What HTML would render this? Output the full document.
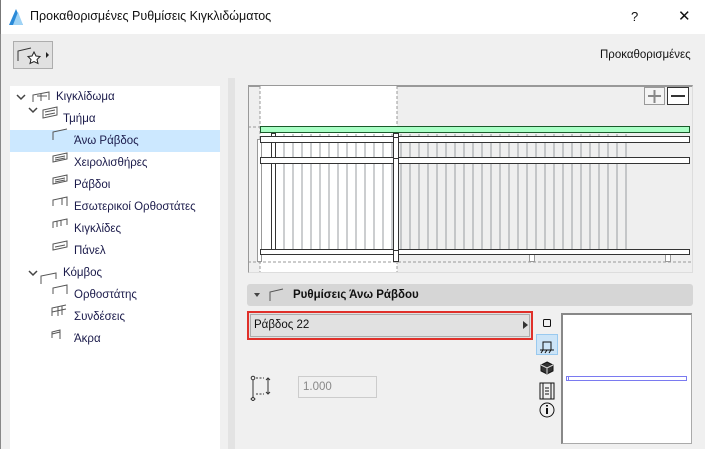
<!DOCTYPE html>
<html><head><meta charset="utf-8"><style>
*{margin:0;padding:0;box-sizing:border-box}
body{width:705px;height:449px;background:#f0f0f0;font-family:"Liberation Sans","DejaVu Sans",sans-serif;font-size:11.5px;color:#1a1a4a;position:relative;overflow:hidden}
.a{position:absolute}
.t{position:absolute;white-space:nowrap}
</style></head><body>
<div class="a" style="left:0;top:0;width:705px;height:34px;background:#fff;border-left:1px solid #777;"></div>
<svg class="a" style="left:8px;top:8px" width="16" height="18"><path d="M1 17 L8 1 L15 17Z" fill="#2a8ad8"/><path d="M5 17 L10 4 L15 17Z" fill="#9fd3f5"/></svg>
<div class="t" style="left:30px;top:9px;font-size:12.5px;color:#111">Προκαθορισμένες Ρυθμίσεις Κιγκλιδώματος</div>
<div class="t" style="left:631px;top:9px;font-size:13px;color:#111">?</div>
<div class="t" style="left:678px;top:7px;font-size:15px;color:#111">✕</div>
<div class="a" style="left:0;top:34px;width:1px;height:415px;background:#888"></div>
<div class="a" style="left:13px;top:41px;width:40px;height:28px;border:1px solid #adadad;background:#e1e1e1"></div>
<svg class="a" style="left:13px;top:41px" width="40" height="28"><path d="M5 20V10L18 7" fill="none" stroke="#333"/><path d="M21 11l2 4 4 .5-3 3 1 4-4-2-4 2 1-4-3-3 4-.5z" fill="#fff" stroke="#222"/><path d="M33 11l3 3-3 3z" fill="#222"/></svg>
<div class="t" style="left:600px;top:49px;font-size:11.5px;color:#111">Προκαθορισμένες</div>
<div class="a" style="left:10px;top:86px;width:210px;height:363px;background:#fff"></div>
<div class="a" style="left:10px;top:130px;width:210px;height:22px;background:#cce8ff"></div>
<div class="a" style="left:228px;top:78px;width:7px;height:371px;background:#e3e3e3"></div>
<svg class="a" style="left:0;top:86px" width="220" height="270" fill="none" stroke="#555" stroke-width="1">
<path d="M17 9l4 4 4-4M29 22l4 4 4-4M29 185l4 4 4-4" stroke="#444" stroke-width="1.5"/>
<path d="M33 16V9l16-3v8M37 10h10M41 8v7"/>
<path d="M43 32V24l14-3v8zM45 26l10-2M45 29l10-2"/>
<path d="M53 54V46l14-3"/>
<path d="M53 76V70l14-3v6zM55 72l10-2M55 74l10-2"/>
<path d="M53 98V92l14-3v6zM55 94l10-2M55 96l10-2"/>
<path d="M53 120V114l14-3v9M62 112v7"/>
<path d="M53 142V136l14-3v6M57 135v6M61 134v6"/>
<path d="M53 164V158l14-3v6zM55 161l10-2"/>
<path d="M41 198V190l15-3v6"/>
<path d="M53 208V202l14-3v9"/>
<path d="M52 230V222l14-3M52 226l14-3M58 221v9M62 220v9"/>
<path d="M52 252V246l8-2v9M52 248l8-2"/>
</svg>
<div class="t" style="left:56px;top:91px">Κιγκλίδωμα</div>
<div class="t" style="left:63px;top:113px">Τμήμα</div>
<div class="t" style="left:74px;top:135px">Άνω Ράβδος</div>
<div class="t" style="left:74px;top:157px">Χειρολισθήρες</div>
<div class="t" style="left:74px;top:179px">Ράβδοι</div>
<div class="t" style="left:74px;top:201px">Εσωτερικοί Ορθοστάτες</div>
<div class="t" style="left:74px;top:223px">Κιγκλίδες</div>
<div class="t" style="left:74px;top:245px">Πάνελ</div>
<div class="t" style="left:63px;top:267px">Κόμβος</div>
<div class="t" style="left:74px;top:289px">Ορθοστάτης</div>
<div class="t" style="left:74px;top:311px">Συνδέσεις</div>
<div class="t" style="left:74px;top:333px">Άκρα</div>

<div class="a" style="left:248px;top:85px;width:445px;height:188px;background:#efefef;border-top:2px solid #999;border-left:1px solid #999;border-right:1px solid #ddd;border-bottom:1px solid #ddd"></div>
<svg class="a" style="left:248px;top:85px" width="445" height="188">
<rect x="12" y="1" width="137" height="186" fill="#fff"/>
<path d="M12 1V187M149 1V187M0 42H12M0 177H444" stroke="#999" stroke-dasharray="3 2"/>
</svg>
<svg class="a" style="left:0;top:0" width="705" height="449">
<path d="M284 134v115m9-115v115m9-115v115m9-115v115m9-115v115m9-115v115m9-115v115m9-115v115m9-115v115m9-115v115m9-115v115m9-115v115m9-115v115m9-115v115m9-115v115m9-115v115m9-115v115m9-115v115m9-115v115m9-115v115m9-115v115m9-115v115m9-115v115m9-115v115m9-115v115m9-115v115m9-115v115m9-115v115m9-115v115m9-115v115m9-115v115m9-115v115m9-115v115m9-115v115m9-115v115m9-115v115m9-115v115m9-115v115m9-115v115" stroke="#9a9ea2" stroke-width="1"/>
<rect x="257.5" y="139.5" width="4" height="122" fill="#fff" stroke="#999"/>
<rect x="271.5" y="133.5" width="4" height="116" fill="#fff" stroke="#333"/>
<rect x="529.5" y="249.5" width="5" height="12" fill="#fff" stroke="#999"/>
<rect x="665.5" y="249.5" width="5" height="12" fill="#fff" stroke="#999"/>
<rect x="260.5" y="126.5" width="429" height="6" fill="#aaffc6" stroke="#1a5a2a"/>
<rect x="260.5" y="136.5" width="429" height="6" fill="#fff" stroke="#333"/>
<rect x="260.5" y="157.5" width="429" height="6" fill="#fff" stroke="#333"/>
<rect x="260.5" y="249.5" width="429" height="5" fill="#fff" stroke="#333"/>
<rect x="393.5" y="133.5" width="5" height="128" fill="#fff" stroke="#333"/>
<path d="M394 137.5h4M394 158.5h4M394 250.5h4" stroke="#333"/>
<rect x="644.5" y="87.5" width="20" height="17" fill="#f4f4f4" stroke="#999"/>
<path d="M648 96h13M654.5 90v13" stroke="#888" stroke-width="2"/>
<rect x="667.5" y="87.5" width="21" height="17" fill="#fff" stroke="#333"/>
<path d="M671 96h14" stroke="#333" stroke-width="2"/>
</svg>

<div class="a" style="left:247px;top:284px;width:446px;height:22px;background:#d6d6d6;border-radius:3px"></div>
<svg class="a" style="left:250px;top:286px" width="40" height="18"><path d="M4 7h6l-3 4z" fill="#444"/><path d="M20 15V6l13-3" fill="none" stroke="#555"/></svg>
<div class="t" style="left:293px;top:289px;font-weight:bold;font-size:11.5px;color:#111">Ρυθμίσεις Άνω Ράβδου</div>
<div class="a" style="left:247px;top:311px;width:286px;height:29px;border:2px solid #e0302a;background:#e1e1e1"><div style="position:absolute;left:1px;top:1px;right:1px;bottom:1px;border:1px solid #adadad"></div></div>
<div class="t" style="left:254px;top:319px;color:#111">Ράβδος 22</div>
<svg class="a" style="left:522px;top:320px" width="8" height="10"><path d="M1 1l5 4-5 4z" fill="#333"/></svg>

<div class="a" style="left:536px;top:334px;width:22px;height:21px;background:#cce4f7;border:1px solid #99c9ef"></div>
<svg class="a" style="left:535px;top:313px" width="24" height="108" fill="none" stroke="#111">
<rect x="8.5" y="6.5" width="7" height="7" rx="1"/>
<path d="M8 37V29h8v8M5 37h14M6 40l2-3M10 40l2-3M14 40l2-3"/>
<path d="M12 49l6 3v6l-6 3-6-3v-6z" fill="#333"/><path d="M6 52l6 3 6-3M12 55v6" stroke="#ddd"/>
<path d="M5 70h14v16H5zM8 70v16M16 70v16M10 75h4M10 78h4M10 81h4"/>
<circle cx="12" cy="97" r="7"/><path d="M12 95v6M12 92v1.5" stroke-width="2"/>
</svg>
<div class="a" style="left:561px;top:313px;width:131px;height:131px;background:#fff;border:1px solid #aaa;border-top:2px solid #888;border-left:2px solid #888"></div>
<div class="a" style="left:566px;top:376px;width:121px;height:5px;border:1px solid #7a7af0"></div>
<div class="a" style="left:566px;top:376px;width:3px;height:5px;border-right:1px solid #7a7af0"></div>

<svg class="a" style="left:248px;top:375px" width="24" height="26" fill="none" stroke="#333"><circle cx="5" cy="3" r="1.8"/><path d="M5 5v17"/><path d="M8 3h8M8 19h8" stroke-dasharray="2 1.5"/><path d="M20 3v16M18 5l2-2 2 2M18 17l2 2 2-2"/><path d="M5 22l2 2-2 2-2-2z"/></svg>
<div class="a" style="left:298px;top:376px;width:79px;height:22px;border:1px solid #ccc;background:#f0f0f0"></div>
<div class="t" style="left:303px;top:381px;color:#888;font-size:11.5px">1.000</div>
</body></html>
